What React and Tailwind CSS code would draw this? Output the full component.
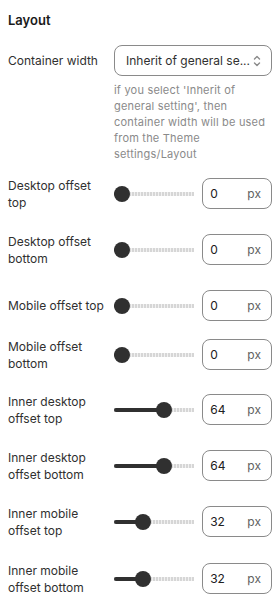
const rows = [
  { label: ['Desktop offset', 'top'], value: 0, mt: 'mt-[16px]' },
  { label: ['Desktop offset', 'bottom'], value: 0, mt: 'mt-[25px]' },
  { label: ['Mobile offset top'], value: 0, mt: 'mt-[25px]' },
  { label: ['Mobile offset', 'bottom'], value: 0, mt: 'mt-[18px]' },
  { label: ['Inner desktop', 'offset top'], value: 64, mt: 'mt-[24px]' },
  { label: ['Inner desktop', 'offset bottom'], value: 64, mt: 'mt-[25px]' },
  { label: ['Inner mobile', 'offset top'], value: 32, mt: 'mt-[25px]' },
  { label: ['Inner mobile', 'offset bottom'], value: 32, mt: 'mt-[26px]' },
];

export default function App() {
  return (
    <div
      className="w-[280px] min-h-[613px] bg-white px-2 pt-[10px] pb-4 text-[#303030]"
      style={{ fontFamily: 'Inter, "Noto Sans", sans-serif' }}
    >
      {/* Heading */}
      <h2 className="text-[13px] leading-5 font-semibold text-[#1a1a1a]">Layout</h2>

      {/* Container width select */}
      <div className="mt-[15px] flex items-center">
        <span className="w-[106px] text-[12px] leading-[17px]">Container width</span>
        <div className="flex h-[31px] flex-1 items-center justify-between rounded-lg border border-[#8a8a8a] pl-[11px] pr-[8px]">
          <span className="text-[12px] text-[#303030] whitespace-nowrap">Inherit of general se...</span>
          <SelectIcon />
        </div>
      </div>
      <p className="ml-[106px] mt-[6px] text-[11px] leading-4 tracking-[0.2px] text-[#8a8a8a]">
        if you select 'Inherit of general setting', then container width will be used from the Theme settings/Layout
      </p>

      {/* Range rows */}
      {rows.map((row, i) => (
        <div key={i} className={`${row.mt} flex h-[31px] items-center`}>
          <div className="w-[106px] text-[12px] leading-[17px]">
            {row.label.map((l, j) => (
              <div key={j} className="whitespace-nowrap">{l}</div>
            ))}
          </div>
          <Slider value={row.value} />
          <div className="ml-[8px] flex h-[31px] w-[70px] items-center justify-between rounded-lg border border-[#8a8a8a] pl-[7px] pr-[10px] text-[12px]">
            <span className="text-[#202020]">{row.value}</span>
            <span className="text-[#616161]">px</span>
          </div>
        </div>
      ))}
    </div>
  );
}

function Slider({ value }) {
  const left = (value / 100) * 66;
  return (
    <div className="relative h-4 w-[81px]">
      {/* dotted track */}
      <div className="absolute left-0 right-0 top-[6px] h-[4px] bg-[repeating-linear-gradient(90deg,#d6d6d6_0_2px,#f1f1f1_2px_3px)]" />
      {/* filled track */}
      <div
        className="absolute left-0 top-[6px] h-[4px] rounded-full bg-[#303030]"
        style={{ width: `${left + 8}px` }}
      />
      {/* thumb */}
      <div
        className="absolute top-[0px] h-4 w-4 rounded-full bg-[#303030]"
        style={{ left: `${left}px` }}
      />
    </div>
  );
}

function SelectIcon() {
  return (
    <svg width="12" height="14" viewBox="0 0 12 14" fill="none" stroke="#8a8a8a" strokeWidth="1.4" strokeLinecap="round" strokeLinejoin="round">
      <path d="M3.5 5 L6 2.5 L8.5 5" />
      <path d="M3.5 9 L6 11.5 L8.5 9" />
    </svg>
  );
}
